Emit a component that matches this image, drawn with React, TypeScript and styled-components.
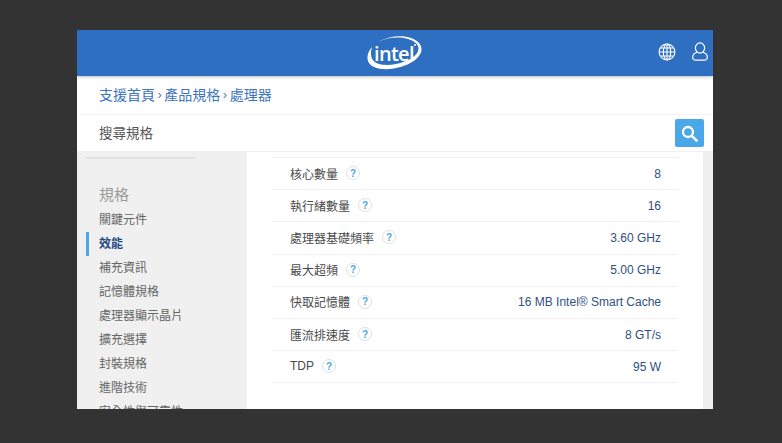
import styled, { createGlobalStyle } from "styled-components"

const cjk = `"Liberation Sans", "Noto Sans CJK TC", sans-serif`

const GlobalStyle = createGlobalStyle`
  html, body {
    margin: 0;
    height: 100%;
    background: #333333;
    font-family: ${cjk};
  }
`

const specs = [
  { label: "核心數量", value: "8" },
  { label: "執行緒數量", value: "16" },
  { label: "處理器基礎頻率", value: "3.60 GHz" },
  { label: "最大超頻", value: "5.00 GHz" },
  { label: "快取記憶體", value: "16 MB Intel® Smart Cache" },
  { label: "匯流排速度", value: "8 GT/s" },
  { label: "TDP", value: "95 W" },
]

const navItems = [
  "關鍵元件",
  "效能",
  "補充資訊",
  "記憶體規格",
  "處理器顯示晶片",
  "擴充選擇",
  "封裝規格",
  "進階技術",
  "安全性與可靠性",
]

function IntelLogo() {
  return (
    <LogoWrap>
      <svg width="58" height="40" viewBox="0 0 58 40" fill="#fff">
        <path d="M12 9C22 3 36 2 45 5C52 7.5 56 12 55.5 17C54.5 26 42 33 28 35.5C15 37.5 4.5 35 2 28C.5 23 2.5 18 6 14C4.5 19 4.5 23 6.5 26.5C10 32 20 33 30 31C42 28.5 52 23 52.5 16C53 11 47 6.5 38 5C29 3.7 20 5 12 9Z" />
        <circle cx="49" cy="12" r="1" />
      </svg>
      <LogoText>intel</LogoText>
    </LogoWrap>
  )
}

function GlobeIcon() {
  return (
    <svg width="18" height="18" viewBox="0 0 18 18" fill="none" stroke="#fff" strokeWidth="1.1">
      <circle cx="9" cy="9" r="7.9" />
      <ellipse cx="9" cy="9" rx="3.7" ry="7.9" />
      <path d="M9 1v16M1.1 9h15.8M2.3 5h13.4M2.3 13h13.4" />
    </svg>
  )
}

function UserIcon() {
  return (
    <svg width="16" height="19" viewBox="0 0 16 19" fill="none" stroke="#fff" strokeWidth="1.2">
      <ellipse cx="8" cy="6" rx="4.6" ry="5.2" />
      <path d="M5 10.2C2.5 11 .7 12.6.7 15c0 2 1 3.2 3 3.2h8.6c2 0 3-1.2 3-3.2 0-2.4-1.8-4-4.3-4.8" />
    </svg>
  )
}

function SearchIcon() {
  return (
    <svg width="17" height="17" viewBox="0 0 17 17" fill="none" stroke="#fff">
      <circle cx="7" cy="7" r="5" strokeWidth="2.3" />
      <path d="M10.8 10.8L15.6 15.6" strokeWidth="2.6" strokeLinecap="round" />
    </svg>
  )
}

export default function App() {
  return (
    <>
      <GlobalStyle />
      <Page>
        <Frame>
          <Header>
            <IntelLogo />
            <HeaderIcons>
              <GlobeIcon />
              <UserIcon />
            </HeaderIcons>
          </Header>
          <Breadcrumb>
            <span>支援首頁</span>
            <Chevron>›</Chevron>
            <span>產品規格</span>
            <Chevron>›</Chevron>
            <span>處理器</span>
          </Breadcrumb>
          <SearchBar>
            <SearchLabel>搜尋規格</SearchLabel>
            <SearchButton aria-label="搜尋">
              <SearchIcon />
            </SearchButton>
          </SearchBar>
          <Body>
            <Sidebar>
              <SideRule />
              <SideTitle>規格</SideTitle>
              {navItems.map((item) => (
                <NavItem key={item} $active={item === "效能"}>
                  {item}
                </NavItem>
              ))}
            </Sidebar>
            <Main>
              <SpecList>
                {specs.map((spec) => (
                  <SpecRow key={spec.label}>
                    <SpecLabel>
                      {spec.label}
                      <HelpBadge>?</HelpBadge>
                    </SpecLabel>
                    <SpecValue>{spec.value}</SpecValue>
                  </SpecRow>
                ))}
              </SpecList>
            </Main>
            <Gutter />
          </Body>
        </Frame>
      </Page>
    </>
  )
}

const Page = styled.div`
  height: 443px;
  box-sizing: border-box;
  padding: 30px 0 0 77px;
  overflow: hidden;
`

const Frame = styled.div`
  width: 636px;
  height: 379px;
  background: #fff;
  display: flex;
  flex-direction: column;
  overflow: hidden;
`

const Header = styled.header`
  height: 46px;
  flex: none;
  background: #2f6fc1;
  box-shadow: 0 1px 3px rgba(0, 0, 0, 0.25);
  display: flex;
  justify-content: center;
  align-items: center;
  position: relative;
  z-index: 1;
`

const LogoWrap = styled.div`
  width: 58px;
  height: 40px;
  position: relative;
`

const LogoText = styled.span`
  position: absolute;
  left: 8px;
  top: 9px;
  color: #fff;
  font-family: "Open Sans", sans-serif;
  font-size: 20px;
  line-height: 24px;
  font-weight: 600;
  letter-spacing: -0.7px;
`

const HeaderIcons = styled.div`
  position: absolute;
  right: 5px;
  top: 12px;
  display: flex;
  align-items: center;
  gap: 16px;
`

const Breadcrumb = styled.nav`
  height: 39px;
  flex: none;
  box-sizing: border-box;
  padding: 0 22px 2px;
  display: flex;
  align-items: center;
  gap: 2.5px;
  font-size: 14px;
  color: #3d74bd;
  border-bottom: 1px solid #f3f3f3;
`

const Chevron = styled.span`
  font-size: 13px;
  color: #5a7fb0;
`

const SearchBar = styled.div`
  height: 37px;
  flex: none;
  box-sizing: border-box;
  padding: 0 9px 0 22px;
  display: flex;
  align-items: center;
  justify-content: space-between;
  border-bottom: 1px solid #f0f0f0;
`

const SearchLabel = styled.span`
  font-size: 13.5px;
  color: #555;
  padding-bottom: 2px;
`

const SearchButton = styled.button`
  width: 29px;
  height: 28px;
  border: 0;
  padding: 0;
  border-radius: 2px;
  background: #4aa8e8;
  display: flex;
  align-items: center;
  justify-content: center;
`

const Body = styled.div`
  flex: 1;
  min-height: 0;
  display: flex;
`

const Sidebar = styled.aside`
  width: 170px;
  flex: none;
  box-sizing: border-box;
  background: #f0f0f0;
  padding: 5px 0 0 9px;
  overflow: hidden;
`

const SideRule = styled.div`
  width: 110px;
  height: 2px;
  background: #e2e2e2;
`

const SideTitle = styled.div`
  margin: 25px 0 0 13px;
  height: 24px;
  line-height: 22px;
  font-size: 15px;
  color: #9a9a9a;
`

const NavItem = styled.div<{ $active?: boolean }>`
  height: 24px;
  line-height: 24px;
  box-sizing: border-box;
  font-size: 12px;
  padding-left: ${(p) => (p.$active ? "10px" : "13px")};
  color: ${(p) => (p.$active ? "#1f4a86" : "#666")};
  font-weight: ${(p) => (p.$active ? 700 : 400)};
  border-left: ${(p) => (p.$active ? "3px solid #4aa8e8" : "0")};
`

const Main = styled.main`
  flex: 1;
  min-width: 0;
  padding: 5px 25px 0;
  background: #fff;
`

const Gutter = styled.div`
  width: 10px;
  flex: none;
  background: #f0f0f0;
`

const SpecList = styled.div`
  border-top: 1px solid #f1f1f1;
`

const SpecRow = styled.div`
  height: 32.2px;
  box-sizing: border-box;
  padding: 0 17px 0 18px;
  display: flex;
  align-items: center;
  justify-content: space-between;
  border-bottom: 1px solid #f1f1f1;
  font-size: 12px;
`

const SpecLabel = styled.div`
  display: flex;
  align-items: center;
  gap: 8px;
  color: #4a4a4a;
  padding-bottom: 1px;
`

const SpecValue = styled.div`
  color: #2f4f80;
`

const HelpBadge = styled.span`
  width: 12px;
  height: 12px;
  border-radius: 50%;
  border: 1px solid #e0e0e0;
  display: flex;
  align-items: center;
  justify-content: center;
  color: #4aa8e8;
  font-size: 10px;
  font-weight: 700;
`
